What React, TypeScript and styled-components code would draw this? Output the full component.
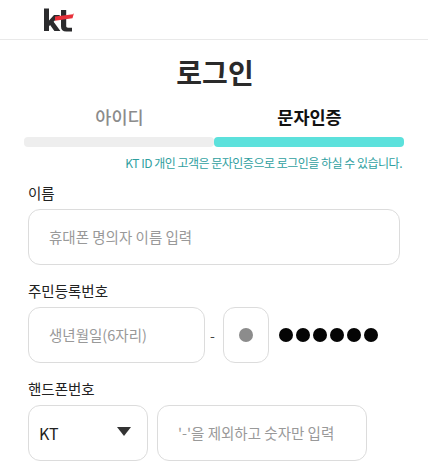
import React from "react";
import styled, { createGlobalStyle } from "styled-components";

const GlobalStyle = createGlobalStyle`
  html, body {
    margin: 0;
    padding: 0;
    background: #fff;
    overflow: hidden;
  }
  * {
    box-sizing: border-box;
  }
  body {
    font-family: "Noto Sans CJK KR", "Noto Sans", sans-serif;
    color: #222;
  }
`;

function KtLogo() {
  return (
    <svg width="30" height="24" viewBox="0 0 30 24">
      <path d="M0 0.500h5v12l5-5.500h6.200l-6.600 6.700 6.800 9.300h-6l-4.300-6-1.100 1.200v4.800h-5z" fill="#2b2b2d" />
      <path d="M17 2h5.200v16c0 1.200.6 1.700 1.800 1.700h4v3.800h-5.700c-3.500 0-5.300-1.700-5.300-5z" fill="#2b2b2d" />
      <path d="M11 8.500l18-2.300 1-1.200-1.500 5.200-17.500 2.600z" fill="#e8303a" />
    </svg>
  );
}

export default function App() {
  return (
    <Page>
      <GlobalStyle />
      <Header>
        <KtLogo />
      </Header>
      <Title>로그인</Title>
      <Tabs>
        <Tab>아이디</Tab>
        <Tab $active>문자인증</Tab>
        <TabBar />
        <TabBar $active />
      </Tabs>
      <Notice>KT ID 개인 고객은 문자인증으로 로그인을 하실 수 있습니다.</Notice>
      <Form>
        <Field>
          <Label>이름</Label>
          <Row>
            <Box $width={372}>
              <Placeholder>휴대폰 명의자 이름 입력</Placeholder>
            </Box>
          </Row>
        </Field>
        <Field>
          <Label>주민등록번호</Label>
          <Row>
            <Box $width={177}>
              <Placeholder>생년월일(6자리)</Placeholder>
            </Box>
            <Dash>-</Dash>
            <DigitBox>
              <Dot $color="#8c8c8c" />
            </DigitBox>
            <Dots>
              {[0, 1, 2, 3, 4, 5].map((i) => (
                <Dot key={i} $color="#050505" />
              ))}
            </Dots>
          </Row>
        </Field>
        <Field>
          <Label>핸드폰번호</Label>
          <PhoneRow>
            <SelectBox>
              <span>KT</span>
              <Caret />
            </SelectBox>
            <PhoneBox>
              <Placeholder>'-'을 제외하고 숫자만 입력</Placeholder>
            </PhoneBox>
          </PhoneRow>
        </Field>
      </Form>
    </Page>
  );
}

const Page = styled.div`
  width: 428px;
  height: 476px;
  overflow: hidden;
`;

const Header = styled.header`
  height: 40px;
  padding: 8px 0 0 44px;
  border-bottom: 1px solid #e9e9e9;
`;

const Title = styled.h1`
  margin: 10px 0 0;
  padding-left: 2px;
  height: 44px;
  text-align: center;
  font-size: 28px;
  line-height: 44px;
  font-weight: 700;
  color: #2a2a2a;
`;

const Tabs = styled.div`
  display: grid;
  grid-template-columns: 190px 190px;
  margin: 0 0 0 24px;
  padding-top: 11px;
`;

const Tab = styled.div<{ $active?: boolean }>`
  height: 32px;
  padding-left: 1px;
  text-align: center;
  font-size: 17.500px;
  line-height: 24px;
  font-weight: ${(p) => (p.$active ? 700 : 500)};
  color: ${(p) => (p.$active ? "#111" : "#8b8b8b")};
`;

const TabBar = styled.div<{ $active?: boolean }>`
  height: 10px;
  border-radius: 4px;
  background: ${(p) => (p.$active ? "#5ce1dc" : "#eeeeee")};
`;

const Notice = styled.p`
  margin: 7px 26px 0 0;
  text-align: right;
  font-size: 12px;
  line-height: 18px;
  letter-spacing: -0.500px;
  color: #2f9f9f;
`;

const Form = styled.div`
  display: flex;
  flex-direction: column;
  gap: 16px;
  padding: 11px 0 0 28px;
`;

const Field = styled.div`
  display: flex;
  flex-direction: column;
`;

const Label = styled.label`
  height: 26px;
  font-size: 14.500px;
  line-height: 20px;
  color: #222;
`;

const Row = styled.div`
  display: flex;
  align-items: center;
`;

const PhoneRow = styled(Row)`
  gap: 9px;
`;

const Box = styled.div<{ $width: number }>`
  display: flex;
  align-items: center;
  width: ${(p) => p.$width}px;
  height: 56px;
  padding: 0 0 2px 20px;
  border: 1px solid #dcdcdc;
  border-radius: 12px;
`;

const Placeholder = styled.span`
  font-size: 14.500px;
  color: #999;
`;

const Dash = styled.span`
  width: 18px;
  padding-left: 5px;
  font-size: 14px;
  color: #444;
`;

const DigitBox = styled.div`
  display: flex;
  align-items: center;
  justify-content: center;
  width: 46px;
  height: 56px;
  border: 1px solid #dcdcdc;
  border-radius: 12px;
`;

const Dot = styled.span<{ $color: string }>`
  display: block;
  width: 14px;
  height: 14px;
  border-radius: 50%;
  background: ${(p) => p.$color};
`;

const Dots = styled.div`
  display: flex;
  gap: 3px;
  margin-left: 10px;
`;

const SelectBox = styled.div`
  display: flex;
  align-items: center;
  justify-content: space-between;
  width: 120px;
  height: 56px;
  padding: 0 16px 0 10px;
  border: 1px solid #dcdcdc;
  border-radius: 12px;
  font-size: 16px;
  color: #222;
`;

const Caret = styled.span`
  width: 0;
  height: 0;
  margin-bottom: 3px;
  border-left: 7px solid transparent;
  border-right: 7px solid transparent;
  border-top: 9px solid #333;
`;

const PhoneBox = styled.div`
  display: flex;
  align-items: center;
  width: 210px;
  height: 56px;
  padding: 0 0 2px 20px;
  border: 1px solid #dcdcdc;
  border-radius: 12px;
`;
